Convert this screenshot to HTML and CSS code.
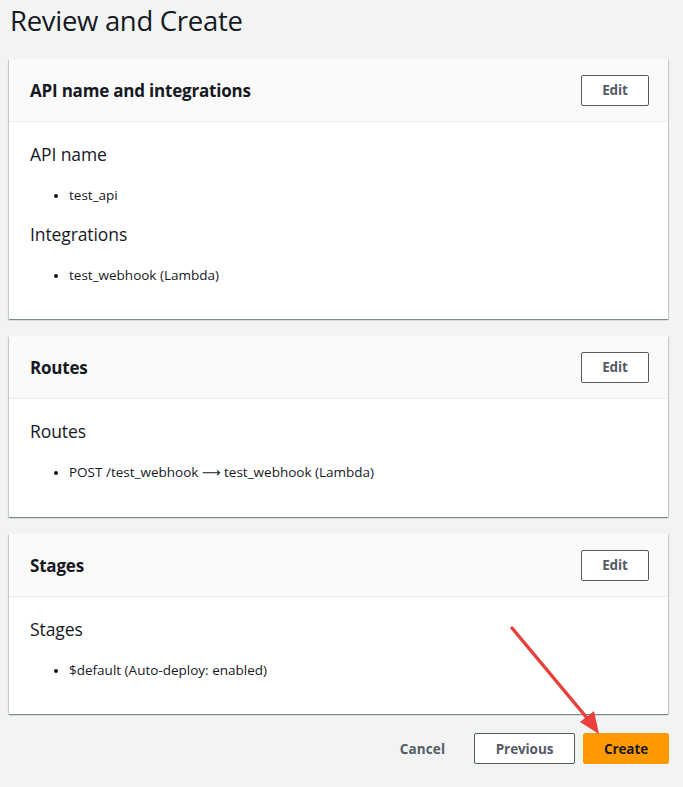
FILE: index.html
```html
<!DOCTYPE html>
<html>
<head>
<meta charset="utf-8">
<link rel="stylesheet" href="styles.css">
</head>
<body>
<div class="page">
  <h1 class="title">Review and Create</h1>

  <section class="card">
    <div class="card-head">
      <h2>API name and integrations</h2>
      <button class="btn btn-normal btn-edit">Edit</button>
    </div>
    <div class="card-body">
      <h3>API name</h3>
      <ul><li>test_api</li></ul>
      <h3>Integrations</h3>
      <ul><li>test_webhook (Lambda)</li></ul>
    </div>
  </section>

  <section class="card">
    <div class="card-head">
      <h2>Routes</h2>
      <button class="btn btn-normal btn-edit">Edit</button>
    </div>
    <div class="card-body">
      <h3>Routes</h3>
      <ul><li>POST /test_webhook <span class="longarrow">⟶</span> test_webhook (Lambda)</li></ul>
    </div>
  </section>

  <section class="card">
    <div class="card-head">
      <h2>Stages</h2>
      <button class="btn btn-normal btn-edit">Edit</button>
    </div>
    <div class="card-body">
      <h3>Stages</h3>
      <ul><li>$default (Auto-deploy: enabled)</li></ul>
    </div>
  </section>

  <div class="actions">
    <button class="btn btn-link">Cancel</button>
    <button class="btn btn-normal btn-prev">Previous</button>
    <button class="btn btn-primary">Create</button>
  </div>

  <svg class="arrow" width="110" height="120" viewBox="0 0 110 120">
    <line x1="4" y1="4" x2="84" y2="100" stroke="#e8413c" stroke-width="3.5" stroke-linecap="round"/>
    <polygon points="91,110 72,98 86,87" fill="#e8413c"/>
  </svg>
</div>
</body>
</html>
```

FILE: styles.css
```css
* { box-sizing: border-box; }
html, body {
  margin: 0;
  padding: 0;
  background: #f2f3f3;
}
body {
  font-family: "Open Sans", "Noto Sans", sans-serif;
  color: #16191f;
}
.page {
  position: relative;
  width: 683px;
  height: 787px;
  padding: 0 15px 0 9px;
  overflow: hidden;
}
.title {
  margin: 0;
  padding: 3px 0 0 1px;
  height: 59px;
  font-size: 27.5px;
  font-weight: 400;
  line-height: 36px;
  letter-spacing: -0.3px;
  color: #16191f;
}
.card {
  background: #fff;
  box-shadow: 0 1px 1px 0 rgba(0,28,36,0.3), 1px 1px 1px 0 rgba(0,28,36,0.15), -1px 1px 1px 0 rgba(0,28,36,0.15);
  margin-bottom: 17px;
}
.card-head {
  display: flex;
  align-items: center;
  justify-content: space-between;
  height: 63px;
  padding: 0 19px 0 21px;
  background: #fafafa;
  border-bottom: 1px solid #eaeded;
}
.card-head h2 {
  margin: 0;
  font-size: 17px;
  font-weight: 700;
  letter-spacing: -0.2px;
}
.card-body {
  padding: 18px 21px 19px;
}
.card-body h3 {
  margin: 0;
  font-size: 17.5px;
  font-weight: 400;
  line-height: 28px;
  letter-spacing: -0.1px;
}
.card-body ul {
  margin: 0;
  padding: 15px 0 13px 39px;
  font-size: 13.5px;
  line-height: 24px;
}
.card-body ul li::marker { font-size: 12px; }
.longarrow {
  font-family: "DejaVu Sans", sans-serif;
  font-size: 13px;
}
.btn {
  font-family: "Open Sans", "Noto Sans", sans-serif;
  font-weight: 700;
  font-size: 13.5px;
  height: 31px;
  border-radius: 2px;
  cursor: pointer;
  letter-spacing: -0.1px;
}
.btn-normal {
  background: #fff;
  border: 1px solid #545b64;
  color: #545b64;
}
.btn-edit { width: 68px; padding: 0; }
.actions {
  display: flex;
  justify-content: flex-end;
  align-items: center;
  gap: 8px;
  padding-top: 2px;
  margin-right: -1px;
}
.btn-link {
  background: transparent;
  border: none;
  color: #545b64;
  padding: 0;
  margin-right: 11px;
  width: 65px;
  letter-spacing: 0.1px;
}
.btn-prev { width: 101px; }
.btn-primary {
  background: #ff9900;
  border: 1px solid #ff9900;
  color: #16191f;
  width: 86px;
}
.arrow {
  position: absolute;
  left: 508px;
  top: 624px;
}
```
